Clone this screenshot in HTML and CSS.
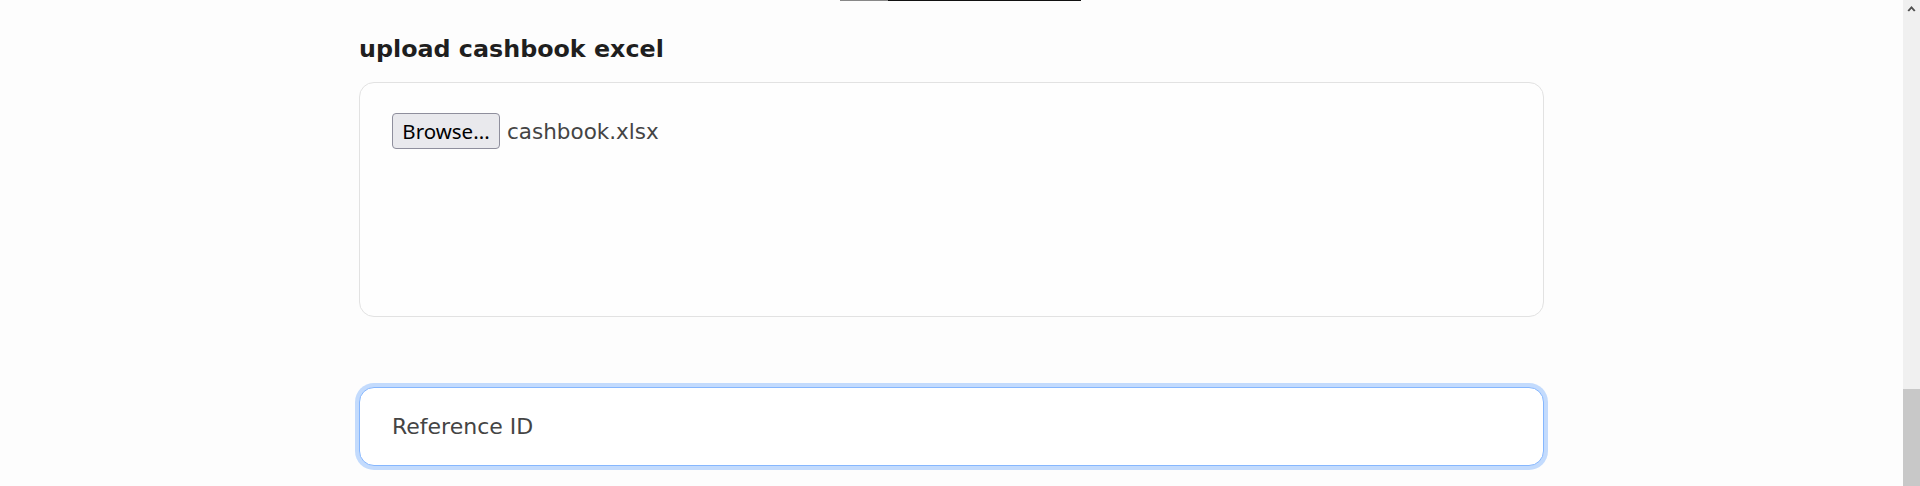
FILE: index.html
```html
<!DOCTYPE html>
<html lang="en">
<head>
<meta charset="utf-8">
<title>Upload cashbook</title>
<link rel="stylesheet" href="styles.css">
</head>
<body>
<div class="viewport">
  <main class="page">
    <div class="container">
      <div class="topline"><span class="seg-gray"></span><span class="seg-black"></span></div>
      <h2 class="title">upload cashbook excel</h2>
      <div class="card">
        <div class="file-row">
          <span class="browse">Browse...</span>
          <span class="filename">cashbook.xlsx</span>
        </div>
      </div>
      <div class="field">
        <div class="input">Reference ID</div>
      </div>
    </div>
  </main>
  <aside class="scrollbar">
    <div class="arrow"><svg width="17" height="17" viewBox="0 0 17 17"><path d="M4.5 10.5 L8.5 6 L12.5 10.5 L11 11.5 L8.5 8.7 L6 11.5 Z" fill="#505050"/></svg></div>
    <div class="track"></div>
    <div class="thumb"></div>
  </aside>
</div>
</body>
</html>
```
FILE: styles.css
```css
* { box-sizing: border-box; }
html, body { margin: 0; padding: 0; height: 100%; overflow: hidden; }
body { background: #fdfdfd; font-family: "DejaVu Sans", "Noto Sans", sans-serif; color: #222; }
.viewport { display: flex; height: 100vh; }
.page { flex: 1; overflow: hidden; }
.container { width: 1185px; margin: 0 auto; }
.topline { display: flex; height: 1px; margin-left: 481px; }
.seg-gray { width: 48px; background: #888; }
.seg-black { width: 193px; background: #111; }
.title { margin: 0; padding-top: 34px; height: 81px; font-size: 23.8px; font-weight: 700; color: #1f1f1f; line-height: 28px; }
.card { height: 235px; border: 1px solid #e2e2e2; border-radius: 15px; background: #fefefe; padding: 30px 32px; }
.file-row { display: flex; align-items: center; gap: 7px; }
.browse { display: inline-flex; align-items: center; justify-content: center; width: 108px; height: 36px; background: #e9e9ed; border: 1px solid #8f8f9d; border-radius: 4px; font-family: "Noto Sans", sans-serif; font-size: 20.5px; color: #000; }
.filename { font-size: 21.5px; color: #444; }
.field { padding-top: 70px; }
.input { height: 79px; border: 1px solid #86b7fe; border-radius: 15px; background: #fff; box-shadow: 0 0 0 4px #c3dbfd; display: flex; align-items: center; padding-left: 32px; font-size: 22px; color: #444; }
.scrollbar { width: 17px; background: #f0f0f0; display: flex; flex-direction: column; }
.arrow { height: 17px; }
.track { flex: 1; }
.thumb { height: 97px; background: #c8c8c8; }
```
